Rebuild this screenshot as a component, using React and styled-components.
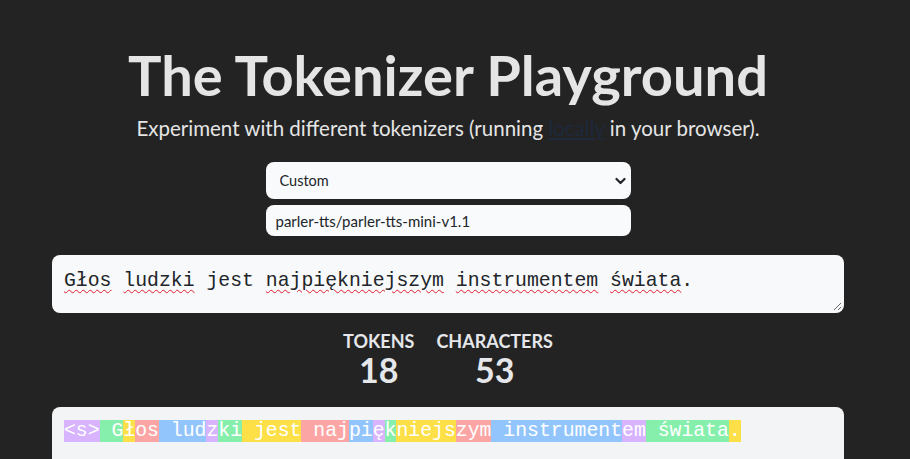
import React from "react";
import styled, { createGlobalStyle } from "styled-components";

const GlobalStyle = createGlobalStyle`
  html, body {
    margin: 0;
    padding: 0;
    background: #232323;
    overflow: hidden;
  }
  body {
    font-family: Lato, "Noto Sans", sans-serif;
    color: #e5e5e5;
  }
`;

const Page = styled.main`
  box-sizing: border-box;
  width: calc(100% - 15px);
  padding: 43px 51px 0 52px;
  display: flex;
  flex-direction: column;
  align-items: center;
`;

const Title = styled.h1`
  margin: 0;
  font-size: 56px;
  line-height: 64px;
  font-weight: 700;
  color: #e5e5e5;
  white-space: nowrap;
`;

const Subtitle = styled.p`
  margin: 7px 0 0;
  font-size: 20.5px;
  line-height: 28px;
  color: #e5e5e5;
  white-space: nowrap;
  a {
    color: #1e293b;
    text-decoration: underline;
  }
`;

const Controls = styled.div`
  margin-top: 20px;
  width: 365px;
  display: flex;
  flex-direction: column;
  gap: 6px;
`;

const SelectWrap = styled.div`
  position: relative;
  svg {
    position: absolute;
    right: 5px;
    top: 50%;
    transform: translateY(-50%);
    pointer-events: none;
  }
`;

const Select = styled.select`
  appearance: none;
  width: 100%;
  height: 37px;
  border: none;
  border-radius: 8px;
  background: #f8fafc;
  padding: 0 14px;
  font-family: Lato, "Noto Sans", sans-serif;
  font-size: 14.5px;
  color: #212529;
  outline: none;
`;

const Input = styled.input`
  box-sizing: border-box;
  width: 100%;
  height: 31px;
  border: none;
  border-radius: 8px;
  background: #f8fafc;
  padding: 0 10px;
  font-family: Lato, "Noto Sans", sans-serif;
  font-size: 15px;
  color: #212529;
  outline: none;
`;

const TextBox = styled.div`
  position: relative;
  box-sizing: border-box;
  margin-top: 19px;
  width: 100%;
  height: 58px;
  padding: 12px;
  border-radius: 8px;
  background: #f8f9fa;
  color: #212529;
  font-family: "Liberation Mono", monospace;
  font-size: 19.8px;
  line-height: 28px;
  white-space: pre;
  svg {
    position: absolute;
    right: 2px;
    bottom: 2px;
  }
`;

const Misspelled = styled.span`
  text-decoration: underline wavy #e11d2e;
  text-decoration-thickness: 1.2px;
  text-underline-offset: 3px;
`;

const Stats = styled.div`
  margin-top: 17px;
  display: flex;
  gap: 22px;
`;

const Stat = styled.div`
  display: flex;
  flex-direction: column;
  align-items: center;
`;

const StatLabel = styled.span`
  font-size: 18px;
  line-height: 22px;
  font-weight: 700;
  color: #e5e7eb;
`;

const StatValue = styled.span`
  font-size: 34px;
  line-height: 36px;
  font-weight: 700;
  color: #e5e7eb;
`;

const TokenBox = styled.div`
  box-sizing: border-box;
  margin-top: 19px;
  width: 100%;
  min-height: 120px;
  padding: 10px 12px;
  border-radius: 8px;
  background: #f3f4f6;
  color: #ffffff;
  font-family: "Liberation Mono", monospace;
  font-size: 19.8px;
  line-height: 28px;
  white-space: pre-wrap;
`;

const Token = styled.span`
  background: ${(p) => p.$bg};
`;

const COLORS = ["#d8b4fe", "#86efac", "#fde047", "#fca5a5", "#93c5fd"];

const TOKENS = [
  "<s>", " G", "ł", "os", " lud", "z", "ki", " jest", " naj", "pi",
  "ę", "k", "niejs", "zym", " instrument", "em", " świata", ".",
];

const TEXT = "Głos ludzki jest najpiękniejszym instrumentem świata.";

const WORDS = [
  ["Głos", true], [" ", false], ["ludzki", true], [" jest ", false],
  ["najpiękniejszym", true], [" ", false], ["instrumentem", true],
  [" ", false], ["świata", true], [".", false],
];

const Chevron = () => (
  <svg width="11" height="8" viewBox="0 0 11 8">
    <path d="M1.5 2 L5.5 6 L9.5 2" fill="none" stroke="#212529" strokeWidth="2.2" strokeLinecap="round" strokeLinejoin="round" />
  </svg>
);

const ResizeHandle = () => (
  <svg width="9" height="9" viewBox="0 0 9 9">
    <path d="M8 1 L1 8 M8 5 L5 8" stroke="#6b6b6b" strokeWidth="1" />
  </svg>
);

export default function App() {
  return (
    <>
      <GlobalStyle />
      <Page>
        <Title>The Tokenizer Playground</Title>
        <Subtitle>
          Experiment with different tokenizers (running <a href="#local">locally</a> in your browser).
        </Subtitle>
        <Controls>
          <SelectWrap>
            <Select defaultValue="custom">
              <option value="custom">Custom</option>
            </Select>
            <Chevron />
          </SelectWrap>
          <Input defaultValue="parler-tts/parler-tts-mini-v1.1" />
        </Controls>
        <TextBox role="textbox">
          {WORDS.map(([w, bad], i) => (bad ? <Misspelled key={i}>{w}</Misspelled> : <span key={i}>{w}</span>))}
          <ResizeHandle />
        </TextBox>
        <Stats>
          <Stat>
            <StatLabel>TOKENS</StatLabel>
            <StatValue>{TOKENS.length}</StatValue>
          </Stat>
          <Stat>
            <StatLabel>CHARACTERS</StatLabel>
            <StatValue>{TEXT.length}</StatValue>
          </Stat>
        </Stats>
        <TokenBox>
          {TOKENS.map((t, i) => (
            <Token key={i} $bg={COLORS[i % COLORS.length]}>{t}</Token>
          ))}
        </TokenBox>
      </Page>
    </>
  );
}
